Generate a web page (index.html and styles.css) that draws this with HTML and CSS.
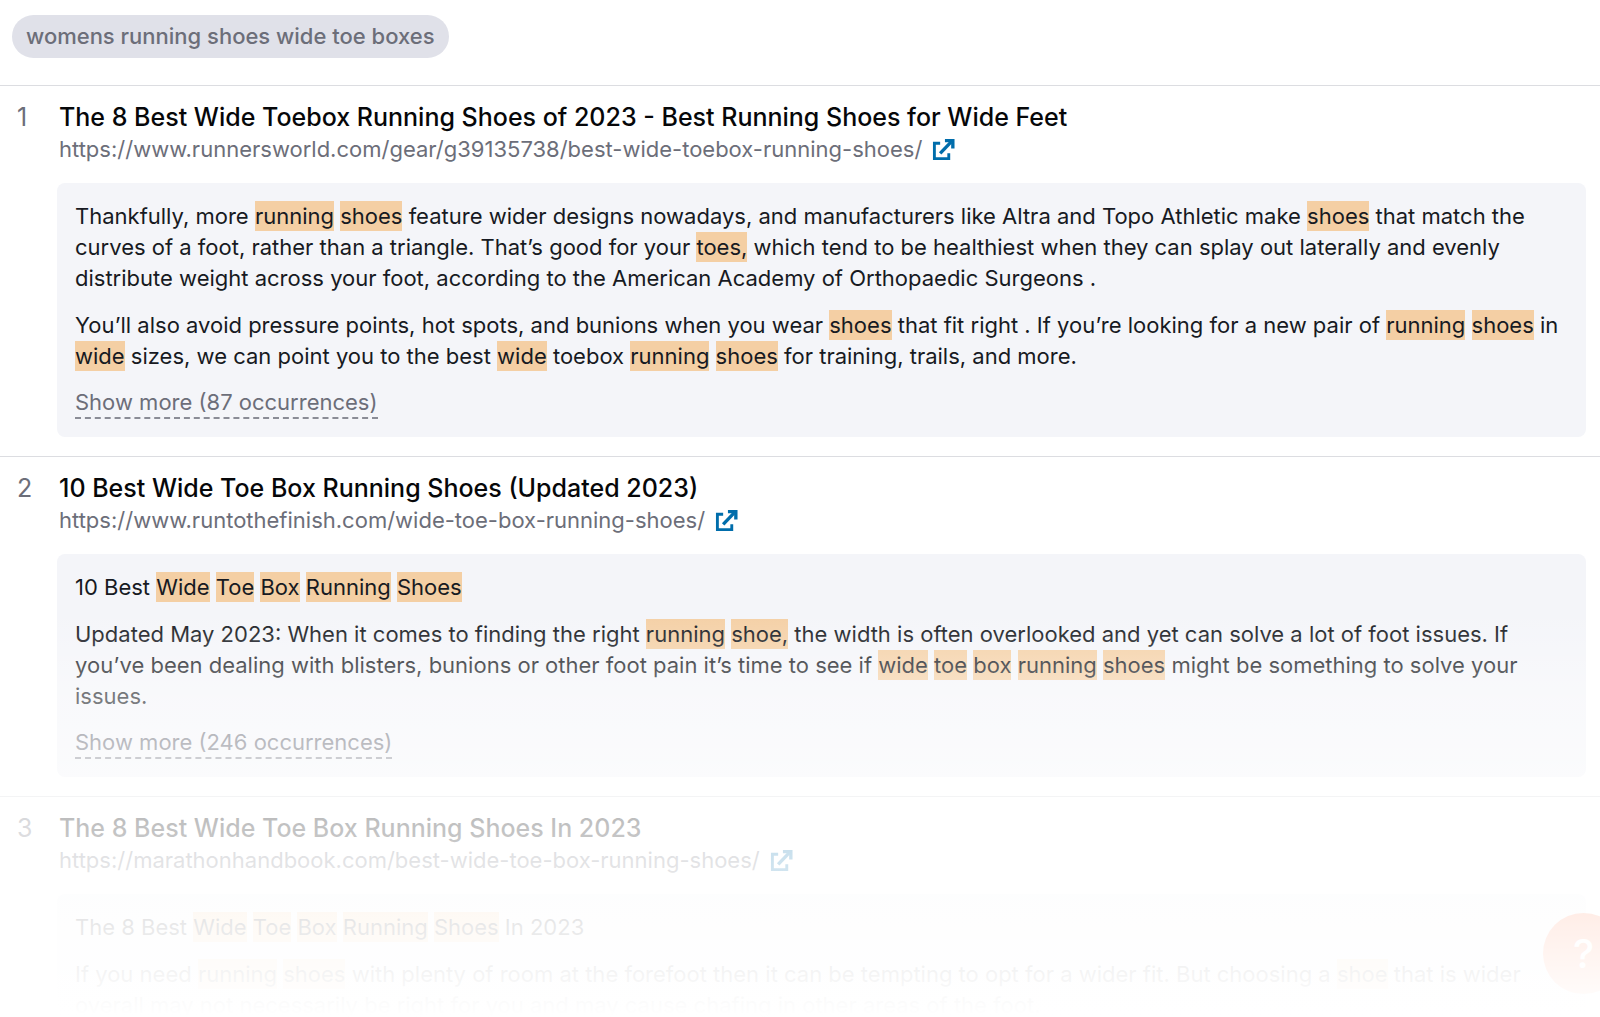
FILE: index.html
```html
<!DOCTYPE html>
<html lang="en">
<head>
    <meta charset="UTF-8">
    <meta name="viewport" content="width=device-width, initial-scale=1.0">
    <title>Keyword usage</title>
    <link rel="stylesheet" href="styles.css">
</head>
<body>

<svg class="sprite" aria-hidden="true">
    <symbol id="external" viewBox="0 0 24 24">
        <path d="M8.500 5.500H2.500V21.500H17.500V16" fill="none" stroke="currentColor" stroke-width="3"/>
        <path d="M8.500 16L20 4" fill="none" stroke="currentColor" stroke-width="3.500"/>
        <path d="M13.500 1H23.500V11H20V4.500H13.500Z" fill="currentColor"/>
    </symbol>
</svg>

<div class="page">
    <header class="keywords">
        <span class="tag">womens running shoes wide toe boxes</span>
    </header>

    <main>
        <article class="result">
            <span class="rank">1</span>
            <div class="info">
                <h2>The 8 Best Wide Toebox Running Shoes of 2023 - Best Running Shoes for Wide Feet</h2>
                <a class="url" href="https://www.runnersworld.com/gear/g39135738/best-wide-toebox-running-shoes/">https://www.runnersworld.com/gear/g39135738/best-wide-toebox-running-shoes/ <svg class="icon" aria-hidden="true"><use href="#external"/></svg></a>
                <div class="snippet">
                    <p>Thankfully, more <mark>running</mark> <mark>shoes</mark> feature wider designs nowadays, and manufacturers like Altra and Topo Athletic make <mark>shoes</mark> that match the curves of a foot, rather than a triangle. That’s good for your <mark>toes,</mark> which tend to be healthiest when they can splay out laterally and evenly distribute weight across your foot, according to the American Academy of Orthopaedic Surgeons .</p>
                    <p>You’ll also avoid pressure points, hot spots, and bunions when you wear <mark>shoes</mark> that fit right . If you’re looking for a new pair of <mark>running</mark> <mark>shoes</mark> in <mark>wide</mark> sizes, we can point you to the best <mark>wide</mark> toebox <mark>running</mark> <mark>shoes</mark> for training, trails, and more.</p>
                    <button class="more" type="button">Show more (87 occurrences)</button>
                </div>
            </div>
        </article>

        <article class="result">
            <span class="rank">2</span>
            <div class="info">
                <h2>10 Best Wide Toe Box Running Shoes (Updated 2023)</h2>
                <a class="url" href="https://www.runtothefinish.com/wide-toe-box-running-shoes/">https://www.runtothefinish.com/wide-toe-box-running-shoes/ <svg class="icon" aria-hidden="true"><use href="#external"/></svg></a>
                <div class="snippet">
                    <p>10 Best <mark>Wide</mark> <mark>Toe</mark> <mark>Box</mark> <mark>Running</mark> <mark>Shoes</mark></p>
                    <p>Updated May 2023: When it comes to finding the right <mark>running</mark> <mark>shoe,</mark> the width is often overlooked and yet can solve a lot of foot issues. If you’ve been dealing with blisters, bunions or other foot pain it’s time to see if <mark>wide</mark> <mark>toe</mark> <mark>box</mark> <mark>running</mark> <mark>shoes</mark> might be something to solve your issues.</p>
                    <button class="more" type="button">Show more (246 occurrences)</button>
                </div>
            </div>
        </article>

        <article class="result">
            <span class="rank">3</span>
            <div class="info">
                <h2>The 8 Best Wide Toe Box Running Shoes In 2023</h2>
                <a class="url" href="https://marathonhandbook.com/best-wide-toe-box-running-shoes/">https://marathonhandbook.com/best-wide-toe-box-running-shoes/ <svg class="icon" aria-hidden="true"><use href="#external"/></svg></a>
                <div class="snippet">
                    <p>The 8 Best <mark>Wide</mark> <mark>Toe</mark> <mark>Box</mark> <mark>Running</mark> <mark>Shoes</mark> In 2023</p>
                    <p>If you need <mark>running</mark> <mark>shoes</mark> with plenty of room at the forefoot then it can be tempting to opt for a wider fit. But choosing a <mark>shoe</mark> that is wider overall may not necessarily be right for you and may cause chafing in other areas of the foot.</p>
                </div>
            </div>
        </article>
    </main>

    <button class="help" type="button" aria-label="Help">?</button>
    <div class="fade"></div>
</div>

</body>
</html>
```
FILE: styles.css
```css
* {
    box-sizing: border-box;
}
body {
    margin: 0;
    background-color: #fff;
    color: #171a22;
    font-family: Inter, sans-serif;
    font-size: 22px;
    line-height: 31px;
}
.sprite {
    display: none;
}
.page {
    position: relative;
    height: 100vh;
    overflow: hidden;
}
.keywords {
    display: flex;
    padding: 15px 12px 27px;
}
.tag {
    padding: 6px 14px;
    border-radius: 22px;
    background-color: #e0e1e9;
    color: #6c6e79;
    font-weight: 500;
}
.result {
    display: flex;
    padding: 14px 14px 19px 0;
    border-top: 1px solid #dcdde1;
}
.rank {
    flex: none;
    width: 57px;
    padding-left: 17px;
    color: #6c6e79;
    font-size: 25px;
    line-height: 34px;
}
.info {
    flex: 1;
}
h2 {
    margin: 0;
    padding-left: 2px;
    color: #060709;
    font-size: 25px;
    font-weight: 500;
    line-height: 34px;
}
.url {
    display: flex;
    align-items: center;
    gap: 10px;
    padding-left: 2px;
    color: #6c6e79;
    text-decoration: none;
}
.icon {
    width: 23px;
    height: 23px;
    color: #006dab;
}
.snippet {
    margin-top: 18px;
    padding: 18px;
    border-radius: 8px;
    background-color: #f4f5f9;
}
p {
    margin: 0 0 16px;
}
mark {
    padding: 2px 0;
    background-color: #f4cfa4;
    color: inherit;
}
.more {
    display: block;
    padding: 0;
    border: 0;
    border-bottom: 2px dashed #8a8c96;
    background: none;
    color: #6c6e79;
    font: inherit;
    line-height: 29px;
    cursor: pointer;
}
.help {
    position: absolute;
    right: -24px;
    bottom: 23px;
    width: 81px;
    height: 81px;
    border: 0;
    border-radius: 50%;
    background-color: #ff642d;
    color: #fff;
    font: 500 40px Inter, sans-serif;
}
/* whites out the bottom of the list */
.fade {
    position: absolute;
    inset: 0;
    background: linear-gradient(transparent 60%, rgba(255, 255, 255, 0.4) 68%, rgba(255, 255, 255, 0.75) 81%, rgba(255, 255, 255, 0.9) 91%, #fff);
    pointer-events: none;
}
```
